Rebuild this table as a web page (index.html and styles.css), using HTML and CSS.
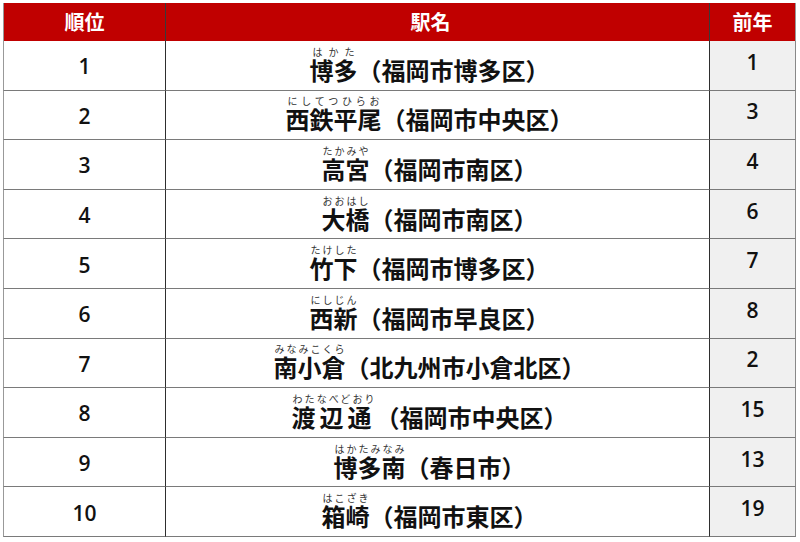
FILE: index.html
```html
<!DOCTYPE html>
<html lang="ja">
<head>
<meta charset="utf-8">
<link rel="stylesheet" href="styles.css">
</head>
<body>
<div class="rank">
  <div class="hd hd-first">順位</div><div class="hd hd-name">駅名</div><div class="hd hd-last">前年</div>

  <div class="num">1</div><div class="name"><span><ruby>博多<rt>はかた</rt></ruby>（福岡市博多区）</span></div><div class="prev">1</div>
  <div class="num">2</div><div class="name"><span><ruby>西鉄平尾<rt>にしてつひらお</rt></ruby>（福岡市中央区）</span></div><div class="prev">3</div>
  <div class="num">3</div><div class="name"><span><ruby>高宮<rt>たかみや</rt></ruby>（福岡市南区）</span></div><div class="prev">4</div>
  <div class="num">4</div><div class="name"><span><ruby>大橋<rt>おおはし</rt></ruby>（福岡市南区）</span></div><div class="prev">6</div>
  <div class="num">5</div><div class="name"><span><ruby>竹下<rt>たけした</rt></ruby>（福岡市博多区）</span></div><div class="prev">7</div>
  <div class="num">6</div><div class="name"><span><ruby>西新<rt>にしじん</rt></ruby>（福岡市早良区）</span></div><div class="prev">8</div>
  <div class="num">7</div><div class="name"><span><ruby>南小倉<rt>みなみこくら</rt></ruby>（北九州市小倉北区）</span></div><div class="prev">2</div>
  <div class="num">8</div><div class="name"><span><ruby><span class="spread">渡辺通</span><rt>わたなべどおり</rt></ruby>（福岡市中央区）</span></div><div class="prev">15</div>
  <div class="num">9</div><div class="name"><span><ruby>博多南<rt>はかたみなみ</rt></ruby>（春日市）</span></div><div class="prev">13</div>
  <div class="num">10</div><div class="name"><span><ruby>箱崎<rt>はこざき</rt></ruby>（福岡市東区）</span></div><div class="prev">19</div>
</div>
</body>
</html>
```
FILE: styles.css
```css
html, body {
  margin: 0;
  background: #ffffff;
}
body {
  padding: 3px 0 0 3px;
  font-family: "Noto Sans CJK JP", "Noto Sans", sans-serif;
  color: #111;
}
.rank {
  display: grid;
  grid-template-columns: 162px 544px 87px;
  grid-template-rows: 38px repeat(10, 49.6px);
  width: 793px;
}
.rank > div {
  box-sizing: border-box;
  display: flex;
  align-items: center;
  justify-content: center;
  line-height: 1;
}
.hd {
  background: #c00000;
  color: #ffffff;
  font-weight: 700;
  font-size: 20px;
  border-left: 1px solid #3a3a3a;
}
.hd-first { border-left: 1px solid #999; }
.hd-last { border-right: 1px solid #999; }
.hd-name { padding-right: 14px; }
.num, .name, .prev {
  border-bottom: 1px solid #7a7a7a;
  border-left: 1px solid #2e2e2e;
}
.num {
  border-left: 1px solid #999;
  font-family: "Open Sans", "Noto Sans", sans-serif;
  font-size: 21px;
  font-weight: 600;
  padding-top: 3px;
}
.name {
  font-size: 24px;
  font-weight: 700;
  padding-right: 16px;
  padding-bottom: 2px;
}
.name ruby rt {
  font-size: 10px;
  font-weight: 400;
  color: #333;
  line-height: 1.3;
}
.spread {
  letter-spacing: 4px;
}
.prev {
  background: #f0f0f0;
  font-family: "Open Sans", "Noto Sans", sans-serif;
  font-size: 21px;
  font-weight: 600;
  border-right: 1px solid #888;
  padding-bottom: 6px;
}
```
